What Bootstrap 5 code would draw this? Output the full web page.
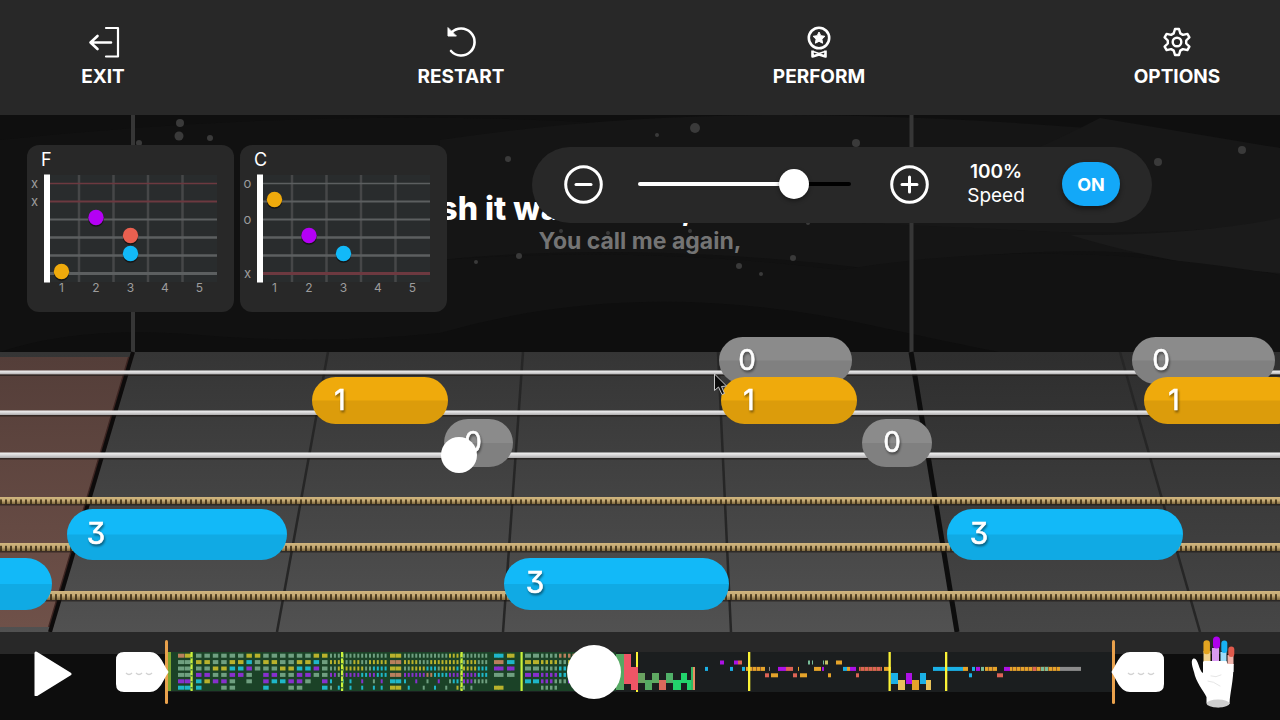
<!DOCTYPE html>
<html lang="en">
<head>
<meta charset="utf-8">
<meta name="viewport" content="width=device-width, initial-scale=1">
<title>Guitar player</title>
<link href="https://cdn.jsdelivr.net/npm/bootstrap@5.3.0/dist/css/bootstrap.min.css" rel="stylesheet">
<style>
  body { font-family: Inter, "Liberation Sans", sans-serif; background: #0d0d0d; color: #fff; }
  .panel { background: #282828; }
  .topbar { padding: 24px 43px; height: 115px; }
  .tool { width: 120px; padding: 0; border: 0; color: #fff; font-size: 19px; font-weight: 700; line-height: 26px; }
  .tool:hover { color: #fff; }
  .stage { min-height: 517px; background: #0f0f0f; }
  .overlay { padding: 30px 10% 0 27px; }
  .chord { width: 207px; height: 167px; border-radius: 12px; }
  .chords { gap: 6px; }
  .lyrics { padding-top: 76px; }
  .line-now { font-size: 32px; line-height: 36px; font-weight: 800; }
  .line-next { font-size: 23px; line-height: 28px; font-weight: 700; color: #747474; }
  .speed { height: 76px; margin-top: 2px; padding: 0 32px 2px; }
  .round { width: 39px; height: 39px; padding: 0; border: 0; color: #fff; line-height: 0; }
  .tempo { width: 213px; margin: 0 39px 0 35px; }
  .readout { width: 66px; margin: 0 33px 0 34px; line-height: 24px; font-size: 19px; }
  .on { width: 58px; height: 44px; padding: 0; border: 0; background: #13a8f8; color: #fff; font-size: 18px; font-weight: 700; box-shadow: 0 3px 5px rgba(0,0,0,.45); }
  input[type=range] { appearance: none; -webkit-appearance: none; background: transparent; }
  .tempo::-webkit-slider-runnable-track { height: 4px; border-radius: 2px; background: linear-gradient(90deg, #fff 74%, #000 74%); }
  .tempo::-webkit-slider-thumb { -webkit-appearance: none; width: 30px; height: 30px; margin-top: -13px; border-radius: 50%; background: #fff; box-shadow: 0 2px 4px rgba(0,0,0,.4); }
  .transport { height: 88px; padding: 0 43px 8px 34px; background: linear-gradient(#282828 22px, #0d0d0d 22px); }
  .bare { padding: 0; border: 0; line-height: 0; }
  .seek { height: 54px; }
  .seek::-webkit-slider-thumb { -webkit-appearance: none; width: 54px; height: 54px; border-radius: 50%; background: #fff; }
  .loop { z-index: 1; }
  .loop-start { margin: 0 -3px 0 42px; }
  .loop-end { margin: 0 25px 0 -3px; }
  .digit { font-weight: 400; fill: #fff; stroke: #fff; stroke-width: .6px; text-anchor: middle; font-feature-settings: "cv09"; filter: drop-shadow(1px 2px 1px rgba(0,0,0,.45)); }
</style>
</head>
<body class="d-flex flex-column min-vh-100 overflow-x-hidden">

<nav class="topbar panel d-flex justify-content-between align-items-start" aria-label="Song">
  <button class="btn tool" type="button">
    <svg class="d-block mx-auto mb-1" width="36" height="36" viewBox="0 0 36 36" fill="none" stroke="#fff" stroke-width="2.200" stroke-linecap="round" stroke-linejoin="round"><path d="M21 4H33V32.500H21"/><path d="M26 18.500H5.500M12.500 12L5.500 18.500l7 6.500" stroke-width="2.600"/></svg>EXIT</button>
  <button class="btn tool" type="button">
    <svg class="d-block mx-auto mb-1" width="36" height="36" viewBox="0 0 36 36" fill="none" stroke="#fff" stroke-width="2.600" stroke-linecap="round"><path d="M8.500 8.500A13.500 13.500 0 1 1 8 27"/><path d="M5 4v8h8z" fill="#fff" stroke-width="1" stroke-linejoin="round"/></svg>RESTART</button>
  <button class="btn tool" type="button">
    <svg class="d-block mx-auto mb-1" width="36" height="36" viewBox="0 0 36 36" fill="none" stroke="#fff" stroke-width="2.600" stroke-linejoin="round"><circle cx="18" cy="14" r="10.200"/><path d="M18 8l1.800 3.700 4.100.6-3 2.900.7 4-3.600-1.900-3.600 1.900.7-4-3-2.900 4.100-.6z" fill="#fff" stroke-width="1"/><path d="M11.500 26.500V32.500L18 30.500L24.500 32.500V26.500" stroke-width="2.600"/><path d="M12 27.500l6 2 6-2" stroke-width="1.500"/></svg>PERFORM</button>
  <button class="btn tool" type="button">
    <svg class="d-block mx-auto mb-1" width="36" height="36" viewBox="0 0 36 36" fill="none" stroke="#fff" stroke-width="2.400" stroke-linejoin="round"><path d="M16 5h4l1.300 4.400 2.600 1.500 4.500-1 2 3.400-3.200 3.200v3l3.200 3.200-2 3.400-4.500-1-2.600 1.500L20 31h-4l-1.300-4.400-2.600-1.500-4.500 1-2-3.400 3.200-3.200v-3l-3.200-3.200 2-3.400 4.500 1 2.600-1.500z"/><circle cx="18" cy="18" r="4.300"/></svg>OPTIONS</button>
</nav>

<main class="stage position-relative flex-grow-1 overflow-hidden">
  <svg class="position-absolute top-0 start-0 w-100 h-100" viewBox="0 115 1280 517" preserveAspectRatio="xMidYMin slice" role="img" aria-label="Tablature">
    <defs>
      <linearGradient id="board" x1="0" y1="0" x2="0" y2="1"><stop stop-color="#353535"/><stop offset="1" stop-color="#515151"/></linearGradient>
      <linearGradient id="boardDim" x1="0" y1="0" x2="0" y2="1"><stop stop-color="#2e2e2e"/><stop offset="1" stop-color="#464646"/></linearGradient>
      <linearGradient id="played" x1="0" y1="0" x2="0" y2="1"><stop stop-color="#543e39"/><stop offset="1" stop-color="#6f5149"/></linearGradient>
      <linearGradient id="steel" x1="0" y1="0" x2="0" y2="1"><stop stop-color="#f4f4f4"/><stop offset=".5" stop-color="#d6d5d6"/><stop offset="1" stop-color="#aaa9aa"/></linearGradient>
      <linearGradient id="brass" x1="0" y1="0" x2="0" y2="1"><stop stop-color="#d0b57e"/><stop offset=".5" stop-color="#c4a973"/><stop offset="1" stop-color="#7d683f"/></linearGradient>
      <pattern id="wound" width="5" height="12" patternUnits="userSpaceOnUse"><rect width="2" height="12" fill="#33260f" opacity=".8"/></pattern>
    </defs>
    <path d="M0 140Q330 105 640 125T1280 150V352H0z" fill="#111"/>
    <path d="M440 140Q640 110 860 116T1280 148V275Q1100 230 880 270Q640 240 440 260z" fill="#151515"/>
    <path d="M1100 118L1280 148V222Q1180 235 1060 232L840 222Q1000 170 1100 118z" fill="#171717"/>
    <path d="M1070 235Q1200 235 1280 218V273Q1180 268 1070 235z" fill="#1b1b1b"/>
    <path d="M440 260Q640 245 840 270Q1050 235 1280 275V352H440z" fill="#121212"/>
    <path d="M0 352Q80 325 200 335T440 333Q640 275 870 325T1030 352z" fill="#0e0e0e"/>
    <g id="dust" fill="#3a3a3a"></g>
    <path d="M133 115V352M911.500 115V352" stroke="#363636" stroke-width="4"/>
    <rect y="352" width="1280" height="280" fill="url(#board)"/>
    <path d="M911 352H1280V632H957z" fill="url(#boardDim)"/>
    <path d="M0 357H131L51 627H0z" fill="url(#played)"/>
    <path d="M129 357L49 627" stroke="#3d2522" stroke-width="2"/>
    <path d="M133 352L50 632" stroke="#0d0b0b" stroke-width="4"/>
    <path d="M911 352L957 632" stroke="#0d0d0d" stroke-width="5"/>
    <path d="M328 352L277 632M523 352L503 632M718 352L731 632M1120 352L1200 632" stroke="#262626" stroke-width="2.500"/>
    <g id="strings"></g>
    <g id="notes"></g>
    <circle cx="459" cy="455" r="18" fill="#fff"/>
    <path d="M714.500 374V390.500L718.500 387L722 394.500L724.500 393.500L721.500 386.500L726.500 386z" fill="#0b0b0b" stroke="#c8c8c8" stroke-width="1"/>
  </svg>

  <div class="lyrics position-absolute top-0 start-0 w-100 text-center text-nowrap">
    <div class="line-now">I wish it was easier, but it wasn’t</div>
    <div class="line-next">You call me again,</div>
  </div>

  <div class="overlay position-relative d-flex justify-content-between align-items-start">
    <div class="chords d-flex" id="chords"></div>
    <div class="speed panel rounded-pill d-flex align-items-center">
      <button class="btn round" type="button" aria-label="Slower"><svg width="39" height="39" fill="none" stroke="#fff" stroke-width="3" stroke-linecap="round"><circle cx="19.500" cy="19.500" r="17.800"/><path d="M12 19.500h15"/></svg></button>
      <input class="tempo" type="range" min="0" max="130" value="100" aria-label="Speed">
      <button class="btn round" type="button" aria-label="Faster"><svg width="39" height="39" fill="none" stroke="#fff" stroke-width="3" stroke-linecap="round"><circle cx="19.500" cy="19.500" r="17.800"/><path d="M12 19.500h15M19.500 12v15"/></svg></button>
      <div class="readout text-center text-nowrap"><div class="fw-semibold">100%</div><div>Speed</div></div>
      <button class="btn on rounded-pill" type="button">ON</button>
    </div>
  </div>
</main>

<footer class="transport d-flex align-items-center">
  <button class="btn bare" type="button" aria-label="Play"><svg width="40" height="48" viewBox="0 0 40 48"><path d="M2 5V47L36 26z" fill="#fff" stroke="#fff" stroke-width="3" stroke-linejoin="round"/></svg></button>
  <button class="btn bare loop loop-start position-relative" type="button" aria-label="Loop start"><svg width="53" height="64" viewBox="0 0 53 64"><path d="M50.500 1.500V62.500" stroke="#e9a14c" stroke-width="3" stroke-linecap="round"/><path d="M8 12H34C44 12 47 24 52 31Q53 32 52 33C47 40 44 52 34 52H8Q0 52 0 44V20Q0 12 8 12z" fill="#fff"/><path d="M10 33q3 3 6 0M20 33q3 3 6 0M30 33q3 3 6 0" fill="none" stroke="#d2d2d2" stroke-width="1.300"/></svg></button>
  <div class="position-relative flex-fill d-flex align-items-center">
    <svg class="w-100" height="40" viewBox="166 652 948 40" preserveAspectRatio="none" id="song" aria-hidden="true"></svg>
    <input class="seek position-absolute start-0 w-100 m-0" type="range" min="0" max="1000" value="448" aria-label="Position">
  </div>
  <button class="btn bare loop loop-end position-relative" type="button" aria-label="Loop end"><svg width="53" height="64" viewBox="0 0 53 64"><path d="M2.500 1.500V62.500" stroke="#e9a14c" stroke-width="3" stroke-linecap="round"/><path d="M45 12H19C9 12 6 24 1 31Q0 32 1 33C6 40 9 52 19 52H45Q53 52 53 44V20Q53 12 45 12z" fill="#fff"/><path d="M17 33q3 3 6 0M27 33q3 3 6 0M37 33q3 3 6 0" fill="none" stroke="#d2d2d2" stroke-width="1.300"/></svg></button>
  <button class="btn bare" type="button" aria-label="Finger colours">
    <svg width="48" height="74" viewBox="1189 635 48 74" stroke-linecap="round" fill="none">
      <path d="M1193.500 658.500C1190.500 660 1192 666 1194 672C1196 682 1203 690 1206.500 697V703Q1218 711 1229.500 704C1230 692 1233.500 682 1233.500 664L1203 662V673C1199 671 1198 657 1193.500 658.500z" fill="#fff"/>
      <path d="M1207 662V651" stroke="#f1d28f" stroke-width="7" stroke-linecap="butt"/><path d="M1206.700 651V643.500" stroke="#e3a421" stroke-width="6.500"/>
      <path d="M1215.500 662V648" stroke="#d99af2" stroke-width="7" stroke-linecap="butt"/><path d="M1216.500 645V640" stroke="#ae00ee" stroke-width="7"/>
      <path d="M1223.500 662V652" stroke="#9edcf8" stroke-width="6" stroke-linecap="butt"/><path d="M1224.300 650V643.500" stroke="#18b2f2" stroke-width="6"/>
      <path d="M1230.500 665V655" stroke="#f1b5ac" stroke-width="6" stroke-linecap="butt"/><path d="M1231.300 654V649.500" stroke="#e05a4c" stroke-width="6"/>
      <path d="M1203.500 672V661H1226.500L1227.500 664H1233.500V672z" fill="#fff"/>
      <ellipse cx="1218" cy="703.500" rx="11.500" ry="4" fill="#cfcfcf"/>
      <path d="M1211 676q5 2 10-1M1208 681q5 0 12 5" stroke="#e6e6e6" stroke-width="1"/>
    </svg>
  </button>
</footer>

<script>
const C = { y: '#efaa0c', p: '#b400f5', r: '#ea6050', b: '#12b9f8', g: '#8b8b8b' };
const at = id => document.getElementById(id);

// chord cards: string marks, then [finger colour, fret, string]
const chords = [
  { name: 'F', marks: 'xx    ', dots: [['p', 2, 3], ['r', 3, 4], ['b', 3, 5], ['y', 1, 6]] },
  { name: 'C', marks: 'o o  x', dots: [['y', 1, 2], ['p', 2, 4], ['b', 3, 5]] }
];
at('chords').innerHTML = chords.map(c => {
  let s = '<rect x="20" y="30" width="170" height="107" fill="#292c2d"/>';
  for (let i = 0; i < 4; i++) s += `<path d="M${52 + i * 34.5} 30V137" stroke="#464748" stroke-width="2.5"/>`;
  for (let i = 0; i < 6; i++) {
    const m = c.marks[i];
    s += `<path d="M23 ${38.500 + i * 18}H190" stroke="${m === 'x' ? '#6d3940' : '#5c5f60'}" stroke-width="${1.5 + i * .3}"/>`;
    if (m !== ' ') s += `<text x="7.500" y="${42.500 + i * 18}" text-anchor="middle" font-size="13" fill="#9c9c9c">${m}</text>`;
  }
  s += '<rect x="17" y="29.500" width="6" height="108" fill="#fff"/>';
  for (let i = 1; i < 6; i++) s += `<text x="${i * 34.5}" y="147" text-anchor="middle" font-size="12" fill="#9c9c9c">${i}</text>`;
  for (const [k, f, n] of c.dots) s += `<circle cx="${f * 34.5}" cy="${20 + n * 18}" r="7.700" fill="#151515"/><circle cx="${f * 34.5}" cy="${18.500 + n * 18}" r="7.700" fill="${C[k]}"/>`;
  return `<div class="chord panel"><svg width="207" height="167" role="img" aria-label="${c.name} chord"><text x="14" y="21" font-size="18" fill="#fff">${c.name}</text>${s}</svg></div>`;
}).join('');

at('dust').innerHTML = [[180,123,4],[179,136,4.5],[210,138,3],[139,143,3],[508,159,3],[657,135,2],[695,128,5],[856,143,4],[1158,162,4],[1242,150,4],[519,256,3],[476,262,2],[561,231,2],[608,233,2],[690,231,2],[739,266,3],[761,274,2],[793,258,3],[808,223,2]]
  .map(([x, y, r]) => `<circle cx="${x}" cy="${y}" r="${r}"/>`).join('');

at('strings').innerHTML = [[370.5,4],[410.500,4.5],[452.500,5.5],[497,7],[543,8],[591,9]].map(([y, h], i) =>
  `<rect y="${y}" width="1280" height="${h}" fill="url(#${i < 3 ? 'steel' : 'brass'})"/>` +
  (i < 3 ? '' : `<rect y="${y + h * .35}" width="1280" height="${h * .65}" fill="url(#wound)"/>`) +
  `<rect y="${y + h}" width="1280" height="1.500" fill="#1a1613" opacity=".6"/>`).join('');

// notes: colour, left, right, top, height, digit, digit centre
at('notes').innerHTML = [
  ['y',312,448,377,47,'1',340],['g',444,513,419,48,'0',473],['b',67,287,509,51,'3',96],['b',-60,52,558,52,'',0],
  ['b',504,729,558,52,'3',535],['g',719,852,337,47,'0',747],['y',721,857,377,47,'1',749],['g',862,932,419,48,'0',892],
  ['g',1132,1275,337,47,'0',1161],['y',1144,1300,377,47,'1',1174],['b',947,1183,509,51,'3',979]
].map(([k, l, r, t, h, d, x], i) => `<clipPath id="n${i}"><rect x="${l}" y="${t}" width="${r - l}" height="${h}" rx="${h / 2}"/></clipPath>
  <g clip-path="url(#n${i})"><rect x="${l}" y="${t}" width="${r - l}" height="${h}" fill="${C[k]}"/><rect x="${l}" y="${t + h / 2}" width="${r - l}" height="${h / 2}" opacity=".08"/></g>
  ${d && `<text class="digit" x="${x}" y="${t + h / 2 + 9}" font-size="${h > 49 ? 30 : 28}">${d}</text>`}`).join('');

// song overview: one character per note column, one string per guitar string
const O = { g: '#6f9f80', y: '#b9b22c', p: '#8730cd', c: '#1fb6c8', o: '#b97f5c' };
let out = '<rect x="166" y="652" width="948" height="40" fill="#1b1e1f"/><rect x="166" y="652" width="450" height="39" fill="#1b4227"/><rect x="168" y="652" width="3" height="39" fill="#7da52f"/>';
const bar = (x, y, w, h, f) => { out += `<rect x="${x}" y="${y}" width="${w}" height="${h}" fill="${f}"/>`; };
const block = (x0, step, w, rows) => rows.forEach((row, r) => [...row].forEach((ch, i) => { if (O[ch]) bar(x0 + i * step, 653.7 + r * 6.4, w, 4, O[ch]); }));
block(178, 7, 6.5, ['oy', 'gg', 'gg', 'gg', 'pp', 'cc']);
block(196, 8.4, 5.5, ['ggggggyyggggggyy', 'yyggyycgyyggyycg', 'ggyyccpgggyyccpg', 'ppggppg ppggppgg', 'cyppg g pccppg p', 'c  gg   c  gg  c']);
block(330, 3.9, 2, ['ggggggggggggggg', 'yyyyggyyggyyyyy', 'ggyyyyyyyggcccc', 'ppgpppppccppccc', 'c  c c  p  g p ', 'g c  c  c  c c ']);
block(390, 5.7, 5.5, ['yy', 'oo', 'yy', 'oo', 'cc', 'yy']);
block(404, 3.75, 2, ['ggggggggggggyyyy', 'yyyygggyyyyyyyyy', 'ggyyyycccgyyyycc', 'ppppppooccccpppo', 'c  p  g  p  gccc', ' c   g  c  g  yy']);
block(463, 3.7, 2, ['ggggggg', 'gyyyggg', 'yyyyccc', 'ppppccc', 'pppgggg', 'g g    ']);
block(494, 4.5, 5, ['cc', 'oo', 'pp', 'gg', '  ', 'yy']);
block(507, 3.5, 4, ['yy', 'cc', 'pp', 'gg', '  ', '  ']);
block(525, 8, 6, ['gg', 'yy', 'gg', 'pp', 'cc', '  ']);
block(541, 4.5, 2.5, ['ggggoooo', 'yyyyggyy', 'ggggccgg', 'ppppccpp', 'pppgggpp', 'gggg    ']);
const lit = (list) => list.forEach(([x, y, w, h, f]) => bar(x, y, w, h, f));
lit([[616,654,8,36,'#55a963'],[624,654,7,30,'#ee5566'],[631,667,7,23,'#ee5566'],[638,673,7,10,'#6aa160'],[645,680,7,10,'#55a963'],[652,673,7,10,'#5fa962'],[659,680,7,10,'#d96a5c'],[666,673,7,10,'#50b068'],[673,680,8,10,'#22d36c'],[681,673,6,10,'#22d36c'],[687,680,4,10,'#22d36c'],[691,667,2,23,'#33b765'],[693,667,2,23,'#e98c62']]);
const Y = '#e5a32a', P = '#ad11e6', B = '#1bb1e6', R = '#dd6355', T = '#79bd9a';
const small = (row, s) => s.forEach(([x, w, f]) => bar(x, 660.5 + row * 6.4, w, 4, f));
small(0, [[720,4,P],[734,4,P],[738,4,R],[808,2,T],[812,1,T],[823,1,T],[825,3,'#c9c063'],[836,6,Y]]);
small(1, [[705,3,B],[730,3,B],[742,3,B],[746,19,Y],[769,1,'#888'],[778,8,P],[786,7,R],[798,1,Y],[814,7,Y],[822,2,P],[843,4,B],[847,3,Y],[850,6,P],[859,23,R],[884,7,Y],[933,30,B],[963,5,Y],[972,3,B],[976,4,P],[981,3,T],[985,12,Y],[1004,6,P],[1010,50,Y],[1032,5,R],[1041,8,T],[1060,21,'#8b8b8b']]);
small(2, [[765,4,R],[771,7,Y],[793,4,R],[800,7,Y],[828,3,Y],[856,3,R],[969,3,B],[997,6,R]]);
for (let x = 748; x < 1058; x += 4) if (x < 764 || (x > 858 && x < 882) || (x > 984 && x < 996) || x > 1010) bar(x, 667, 1, 4, '#93602f');
lit([[891,673,7,11,B],[898,680,7,10,'#e8c35a'],[906,673,6,11,P],[912,680,7,10,Y],[920,673,6,11,B],[926,680,5,10,'#e8c35a']]);
[190.5, 341, 460.5, 520.5].forEach((x, i) => { bar(x, 652, 2.2, 39, '#c9f23a'); if (i < 3) for (let y = 657; y < 690; y += 6) bar(x, y, 2.2, 1.5, '#4c7d35'); });
bar(636, 652, 2, 15, '#fbf336'); bar(636, 690, 2, 2, '#fbf336');
[748, 888.5, 945].forEach(x => bar(x, 652, 2.3, 39, '#fbf336'));
at('song').innerHTML = out;
</script>
<script src="https://cdn.jsdelivr.net/npm/bootstrap@5.3.0/dist/js/bootstrap.bundle.min.js"></script>
</body>
</html>
